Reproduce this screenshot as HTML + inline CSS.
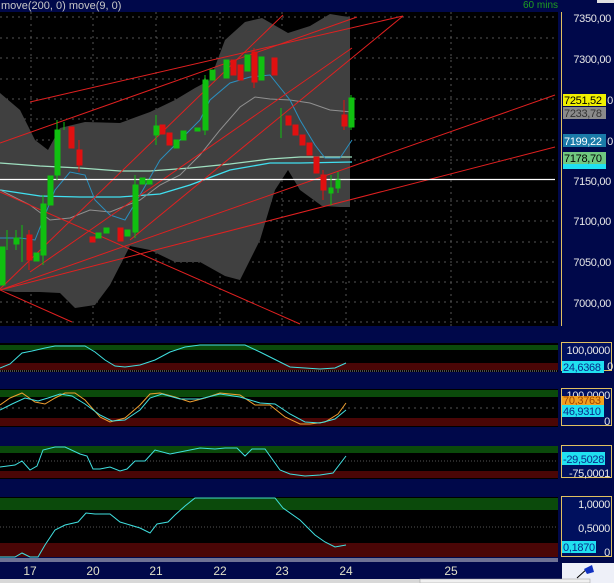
<!DOCTYPE html>
<html><head><meta charset="utf-8"><style>
html,body{margin:0;padding:0;background:#00084a;width:614px;height:583px;overflow:hidden}
svg{display:block}
text{font-family:"Liberation Sans",sans-serif}
</style></head><body>
<svg width="614" height="583" viewBox="0 0 614 583" xmlns="http://www.w3.org/2000/svg">
<rect width="614" height="583" fill="#00084a"/>
<text x="1" y="9" font-size="11" fill="#c8c8c8">move(200, 0) move(9, 0)</text>
<text x="523" y="8" font-size="10" fill="#1f9f1f">60 mins</text>
<rect x="597" y="0" width="17" height="3" fill="#e0e0e0"/>
<rect x="0" y="12" width="558" height="314" fill="#000"/>
<g stroke="#555" stroke-dasharray="2,4" stroke-width="1">
<line x1="0" y1="17" x2="558" y2="17"/><line x1="0" y1="38" x2="558" y2="38"/><line x1="0" y1="58" x2="558" y2="58"/><line x1="0" y1="79" x2="558" y2="79"/><line x1="0" y1="99" x2="558" y2="99"/><line x1="0" y1="119" x2="558" y2="119"/><line x1="0" y1="140" x2="558" y2="140"/><line x1="0" y1="160" x2="558" y2="160"/><line x1="0" y1="201" x2="558" y2="201"/><line x1="0" y1="221" x2="558" y2="221"/><line x1="0" y1="242" x2="558" y2="242"/><line x1="0" y1="262" x2="558" y2="262"/><line x1="0" y1="282" x2="558" y2="282"/><line x1="0" y1="302" x2="558" y2="302"/><line x1="0" y1="322" x2="558" y2="322"/>
<line x1="31" y1="12" x2="31" y2="326"/><line x1="93" y1="12" x2="93" y2="326"/><line x1="156" y1="12" x2="156" y2="326"/><line x1="220" y1="12" x2="220" y2="326"/><line x1="282" y1="12" x2="282" y2="326"/><line x1="346" y1="12" x2="346" y2="326"/><line x1="451" y1="12" x2="451" y2="326"/>
</g>
<polygon fill="#404040" points="0,93 20,110 35,140 48,150 60,128 85,122 120,123 150,112 175,100 195,88 210,80 225,40 245,22 262,18 288,33 310,26 330,14 342,16 350,17 350,207 340,207 322,206 300,190 288,170 275,190 260,240 240,280 225,276 200,262 175,262 150,250 130,246 110,285 95,305 75,308 60,293 40,292 15,292 0,290"/>
<polyline fill="none" stroke="#9fe0c0" stroke-width="1.2" points="0,163 40,166 80,168 120,171 150,171 190,168 230,164 270,159 300,157 352,157"/>
<polyline fill="none" stroke="#40e0f0" stroke-width="1.3" points="0,190 40,196 80,197 120,197 160,194 190,185 230,170 270,163 300,163 352,162"/>
<polyline fill="none" stroke="#909090" stroke-width="1" points="0,190 30,205 50,220 70,218 90,210 110,212 140,200 160,185 180,175 200,155 220,130 240,107 255,97 270,99 290,100 310,103 330,110 352,112"/>
<polyline fill="none" stroke="#2a90c0" stroke-width="1" points="0,238 20,238 35,240 45,215 55,190 70,172 85,175 95,200 110,215 125,220 140,195 160,160 180,140 200,120 210,100 230,83 250,77 270,75 290,100 300,120 315,145 325,158 340,158 352,140"/>
<g stroke="#e02020" stroke-width="1" fill="none">
<line x1="0" y1="289" x2="283" y2="15"/>
<line x1="0" y1="143" x2="357" y2="17"/>
<line x1="30" y1="102" x2="403" y2="16"/>
<line x1="0" y1="290" x2="555" y2="95"/>
<line x1="0" y1="290" x2="555" y2="147"/>
<line x1="30" y1="272" x2="352" y2="48"/>
<line x1="0" y1="192" x2="300" y2="324"/>
<line x1="0" y1="290" x2="72" y2="322"/>
<line x1="130" y1="240" x2="403" y2="16"/>
</g>
<line x1="0" y1="179.5" x2="555" y2="179.5" stroke="#fff" stroke-width="1.2"/>
<g stroke-width="1">
<g fill="#10c010" stroke="#10c010">
<rect x="0" y="247" width="5" height="38"/><rect x="14" y="238" width="5" height="6"/><rect x="34" y="253" width="5" height="8"/><rect x="41" y="204" width="5" height="51"/><rect x="48" y="176" width="5" height="29"/><rect x="55" y="130" width="5" height="45"/><rect x="96" y="233" width="5" height="5"/><rect x="104" y="228" width="5" height="5"/><rect x="125" y="230" width="5" height="6"/><rect x="133" y="185" width="5" height="47"/><rect x="140" y="178" width="5" height="6"/><rect x="147" y="180" width="5" height="4"/><rect x="154" y="126" width="5" height="9"/><rect x="174" y="140" width="5" height="8"/><rect x="181" y="131" width="5" height="9"/><rect x="195" y="128" width="5" height="3"/><rect x="203" y="80" width="5" height="50"/><rect x="210" y="70" width="5" height="10"/><rect x="224" y="60" width="5" height="18"/><rect x="245" y="55" width="5" height="16"/><rect x="259" y="57" width="5" height="23"/><rect x="329" y="188" width="4" height="5"/><rect x="336" y="180" width="4" height="8"/><rect x="349" y="98" width="5" height="29"/>
</g>
<g stroke="#10c010"><line x1="7" y1="230" x2="7" y2="250"/><line x1="16" y1="230" x2="16" y2="250"/><line x1="22" y1="225" x2="22" y2="262"/><line x1="43" y1="195" x2="43" y2="265"/><line x1="57" y1="120" x2="57" y2="180"/><line x1="64" y1="122" x2="64" y2="130"/><line x1="135" y1="175" x2="135" y2="238"/><line x1="156" y1="115" x2="156" y2="145"/><line x1="205" y1="75" x2="205" y2="135"/><line x1="281" y1="108" x2="281" y2="138"/><line x1="331" y1="175" x2="331" y2="205"/><line x1="338" y1="172" x2="338" y2="193"/><line x1="351" y1="95" x2="351" y2="130"/></g>
<g fill="#e01010" stroke="#e01010">
<rect x="27" y="235" width="5" height="25"/><rect x="69" y="127" width="5" height="21"/><rect x="77" y="150" width="5" height="15"/><rect x="90" y="237" width="5" height="5"/><rect x="118" y="228" width="5" height="13"/><rect x="160" y="125" width="5" height="9"/><rect x="167" y="133" width="5" height="12"/><rect x="231" y="60" width="5" height="15"/><rect x="238" y="65" width="5" height="15"/><rect x="252" y="52" width="5" height="30"/><rect x="272" y="58" width="5" height="17"/><rect x="286" y="116" width="5" height="9"/><rect x="293" y="125" width="5" height="10"/><rect x="300" y="135" width="5" height="10"/><rect x="307" y="143" width="5" height="12"/><rect x="314" y="157" width="5" height="16"/><rect x="321" y="175" width="5" height="15"/><rect x="342" y="115" width="5" height="11"/>
</g>
<g stroke="#e01010"><line x1="29" y1="230" x2="29" y2="270"/><line x1="79" y1="140" x2="79" y2="172"/><line x1="254" y1="48" x2="254" y2="88"/><line x1="323" y1="170" x2="323" y2="200"/><line x1="344" y1="100" x2="344" y2="130"/></g>
</g>
<line x1="561.5" y1="12" x2="561.5" y2="326" stroke="#e0c060" stroke-width="1"/>
<g font-size="11" fill="#e8e8e8" text-anchor="end" letter-spacing="-0.3">
<text x="611" y="22">7350,00</text><text x="611" y="63">7300,00</text><text x="611" y="185">7150,00</text><text x="611" y="225">7100,00</text><text x="611" y="266">7050,00</text><text x="611" y="307">7000,00</text>
<text x="613" y="104">0</text><text x="613" y="145">0</text>
</g>
<g font-size="11" letter-spacing="-0.3">
<rect x="563" y="94" width="43" height="12" fill="#f0f000"/><text x="564" y="104" fill="#000">7251,52</text>
<rect x="563" y="107" width="43" height="12" fill="#8a8a8a"/><text x="564" y="117" fill="#333">7233,78</text>
<rect x="563" y="134" width="43" height="13" fill="#1a7aa8"/><text x="564" y="145" fill="#fff">7199,22</text>
<rect x="563" y="152" width="43" height="12" fill="#70c880"/><text x="564" y="162" fill="#000">7178,70</text>
<rect x="563" y="164" width="43" height="5" fill="#20e0f0"/>
</g>
<g>
<rect x="0" y="343" width="558" height="29" fill="#000"/>
<rect x="0" y="345" width="558" height="5" fill="#0b4a0b"/><rect x="0" y="363" width="558" height="7" fill="#4a0606"/>
<line x1="0" y1="371" x2="558" y2="371" stroke="#999" stroke-dasharray="1,1"/>
<polyline fill="none" stroke="#40e0e0" stroke-width="1" points="0,368 10,364 22,353 32,351 45,348 55,346 85,346 95,352 105,360 115,366 125,367 140,365 155,360 170,352 185,347 200,345 245,345 260,352 280,362 290,367 320,369 335,368 346,363"/>
<rect x="0" y="389" width="558" height="38" fill="#000"/>
<rect x="0" y="390" width="558" height="7" fill="#0b4a0b"/><rect x="0" y="418" width="558" height="8" fill="#4a0606"/>
<line x1="0" y1="408" x2="558" y2="408" stroke="#555" stroke-dasharray="2,4"/>
<polyline fill="none" stroke="#f0a030" stroke-width="1" points="0,405 10,398 22,393 35,402 45,404 55,398 65,393 75,393 85,400 100,417 110,422 125,418 140,405 150,394 160,393 175,397 190,402 205,398 220,393 240,395 255,405 270,405 285,417 300,424 310,424 325,422 338,414 346,403"/>
<polyline fill="none" stroke="#40e0e0" stroke-width="1" points="0,410 12,404 25,398 38,401 48,398 60,394 72,396 85,404 100,415 112,421 125,420 140,410 150,398 162,394 180,399 200,399 220,394 240,397 260,403 275,404 290,414 305,422 320,423 335,419 346,410"/>
<rect x="0" y="446" width="558" height="33" fill="#000"/>
<rect x="0" y="446" width="558" height="7" fill="#0b4a0b"/><rect x="0" y="471" width="558" height="7" fill="#4a0606"/>
<line x1="0" y1="461" x2="558" y2="461" stroke="#555" stroke-dasharray="1,2"/>
<polyline fill="none" stroke="#40e0e0" stroke-width="1" points="0,467 15,465 22,461 30,470 37,466 43,450 55,447 65,447 80,454 87,456 93,469 100,469 110,467 120,471 127,469 135,461 145,461 155,450 170,454 185,451 200,448 215,449 225,448 237,448 245,456 252,449 265,449 280,470 290,474 305,476 320,475 333,473 346,456"/>
<rect x="0" y="497" width="558" height="60" fill="#000"/>
<rect x="0" y="498" width="558" height="12" fill="#0b4a0b"/><rect x="0" y="543" width="558" height="14" fill="#4a0606"/>
<line x1="0" y1="527" x2="558" y2="527" stroke="#555" stroke-dasharray="1,2"/>
<line x1="0" y1="559" x2="558" y2="559" stroke="#ddd"/><line x1="0" y1="561" x2="558" y2="561" stroke="#ddd"/>
<polyline fill="none" stroke="#40e0e0" stroke-width="1" points="0,557 15,557 22,553 30,557 38,557 45,545 55,530 65,525 78,522 86,513 95,514 110,514 120,522 130,525 140,528 150,533 157,524 168,522 175,515 185,506 195,498 275,498 283,508 300,520 315,535 325,542 335,547 346,545"/>
</g>
<g fill="#00105e" stroke="#e0c060">
<rect x="561.5" y="342.5" width="50" height="28"/>
<rect x="561.5" y="388.5" width="50" height="37"/>
<rect x="561.5" y="445.5" width="50" height="32"/>
<rect x="561.5" y="496.5" width="50" height="60"/>
</g>
<g font-size="11" fill="#e8e8e8" text-anchor="end" letter-spacing="-0.3">
<text x="610" y="354">100,0000</text><text x="613" y="370">0</text>
<text x="610" y="399">100,0000</text><text x="610" y="425">0</text>
<text x="610" y="477">-75,0001</text>
<text x="610" y="508">1,0000</text><text x="610" y="532">0,5000</text><text x="610" y="556">0</text>
</g>
<g font-size="11" letter-spacing="-0.3">
<rect x="562" y="361" width="42" height="12" fill="#20e0f0"/><text x="563" y="371" fill="#0a2a8a">24,6368</text>
<rect x="562" y="396" width="42" height="9" fill="#f0a020"/><text x="563" y="404" fill="#a04000">70,3763</text>
<rect x="562" y="405" width="42" height="12" fill="#20e0f0"/><text x="563" y="415" fill="#0a2a8a">46,9310</text>
<rect x="562" y="452" width="43" height="13" fill="#20e0f0"/><text x="563" y="463" fill="#0a2a8a">-29,5028</text>
<rect x="562" y="541" width="34" height="12" fill="#20e0f0"/><text x="563" y="551" fill="#0a2a8a">0,1870</text>
</g>
<g font-size="12" fill="#e0e0c8" text-anchor="middle">
<text x="30" y="575">17</text><text x="93" y="575">20</text><text x="156" y="575">21</text><text x="220" y="575">22</text><text x="282" y="575">23</text><text x="346" y="575">24</text><text x="451" y="575">25</text>
</g>
<rect x="562" y="563" width="52" height="20" fill="#eef0f8"/>
<line x1="577" y1="578" x2="588" y2="568" stroke="#000"/>
<polygon points="584,569 592,565 594,572 587,574" fill="#1030c0"/>
<rect x="0" y="579" width="562" height="4" fill="#d8d8d8"/>
<rect x="420" y="579" width="170" height="4" fill="#f0f0f0" stroke="#999" stroke-width="0.5"/>
</svg>
</body></html>
